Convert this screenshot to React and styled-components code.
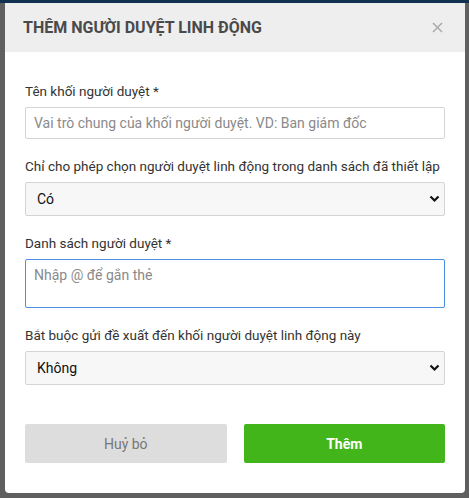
import React from 'react'
import styled, { createGlobalStyle } from 'styled-components'

const Global = createGlobalStyle`
  html, body {
    margin: 0;
    padding: 0;
    background: #5f5f5f;
    font-family: Roboto, "Noto Sans", "Liberation Sans", sans-serif;
  }
  * { box-sizing: border-box; }
`

const Overlay = styled.div`
  min-height: 498px;
  border-top: 3px solid #12304f;
  padding: 0 4px 5px 5px;
  background: #5f5f5f;
`

const Modal = styled.div`
  width: 460px;
  background: #fff;
  border-radius: 0 0 4px 4px;
  overflow: hidden;
`

const Header = styled.div`
  height: 49px;
  background: #eeeeee;
  display: flex;
  align-items: center;
  justify-content: space-between;
  padding: 0 18px 0 18px;

  h2 {
    margin: 0;
    font-size: 16px;
    font-weight: 700;
    color: #4a4a4a;
  }
`

const Close = styled.button`
  border: 0;
  background: none;
  padding: 0;
  width: 20px;
  height: 20px;
  display: flex;
  align-items: center;
  justify-content: center;
  cursor: pointer;
`

const Body = styled.div`
  padding: 29px 20px 30px 20px;
`

const Field = styled.div`
  display: flex;
  flex-direction: column;
  gap: 6px;
  margin-bottom: ${p => (p.$last ? 0 : 17)}px;
`

const Label = styled.label`
  font-size: 13.5px;
  line-height: 20px;
  color: #333;
  white-space: nowrap;
`

const Input = styled.input`
  height: 32px;
  border: 1px solid #d4d4d4;
  border-radius: 2px;
  padding: 0 8px;
  font-family: inherit;
  font-size: 14px;
  color: #333;
  outline: none;
  &::placeholder { color: #8a8a8a; }
`

const Area = styled.textarea`
  height: 49px;
  border: 1px solid #4a90e2;
  border-radius: 2px;
  padding: 5px 8px;
  font-family: inherit;
  font-size: 14px;
  line-height: 20px;
  resize: none;
  outline: none;
  &::placeholder { color: #8a8a8a; }
`

const SelectWrap = styled.div`
  position: relative;
  height: 34px;

  svg {
    position: absolute;
    right: 5px;
    top: 13px;
    pointer-events: none;
  }
`

const Select = styled.select`
  appearance: none;
  width: 100%;
  height: 34px;
  border: 1px solid #d4d4d4;
  border-radius: 2px;
  background: #f7f7f7;
  padding: 0 11px;
  font-family: inherit;
  font-size: 14px;
  color: #111;
  outline: none;
`

const Actions = styled.div`
  display: grid;
  grid-template-columns: 1fr 1fr;
  gap: 17px;
  margin-top: 39px;
`

const Button = styled.button`
  height: 39px;
  border: 0;
  border-radius: 2px;
  font-family: inherit;
  font-size: 14px;
  font-weight: ${p => (p.$primary ? 700 : 400)};
  background: ${p => (p.$primary ? '#42b51a' : '#dddddd')};
  color: ${p => (p.$primary ? '#fff' : '#777')};
  cursor: pointer;
`

const Chevron = () => (
  <svg width="11" height="8" viewBox="0 0 11 8">
    <path d="M1.5 1.5 L5.5 5.5 L9.5 1.5" fill="none" stroke="#111" strokeWidth="2.2" />
  </svg>
)

const App = () => {
  return (
    <Overlay>
      <Global />
      <Modal>
        <Header>
          <h2>THÊM NGƯỜI DUYỆT LINH ĐỘNG</h2>
          <Close aria-label="close">
            <svg width="11" height="11" viewBox="0 0 11 11">
              <path d="M1 1 L10 10 M10 1 L1 10" stroke="#aaa" strokeWidth="1.5" />
            </svg>
          </Close>
        </Header>
        <Body>
          <Field>
            <Label>Tên khối người duyệt *</Label>
            <Input placeholder="Vai trò chung của khối người duyệt. VD: Ban giám đốc" />
          </Field>
          <Field>
            <Label>Chỉ cho phép chọn người duyệt linh động trong danh sách đã thiết lập</Label>
            <SelectWrap>
              <Select defaultValue="yes">
                <option value="yes">Có</option>
                <option value="no">Không</option>
              </Select>
              <Chevron />
            </SelectWrap>
          </Field>
          <Field>
            <Label>Danh sách người duyệt *</Label>
            <Area placeholder="Nhập @ để gắn thẻ" />
          </Field>
          <Field $last>
            <Label>Bắt buộc gửi đề xuất đến khối người duyệt linh động này</Label>
            <SelectWrap>
              <Select defaultValue="no">
                <option value="yes">Có</option>
                <option value="no">Không</option>
              </Select>
              <Chevron />
            </SelectWrap>
          </Field>
          <Actions>
            <Button>Huỷ bỏ</Button>
            <Button $primary>Thêm</Button>
          </Actions>
        </Body>
      </Modal>
    </Overlay>
  )
}

export default App
